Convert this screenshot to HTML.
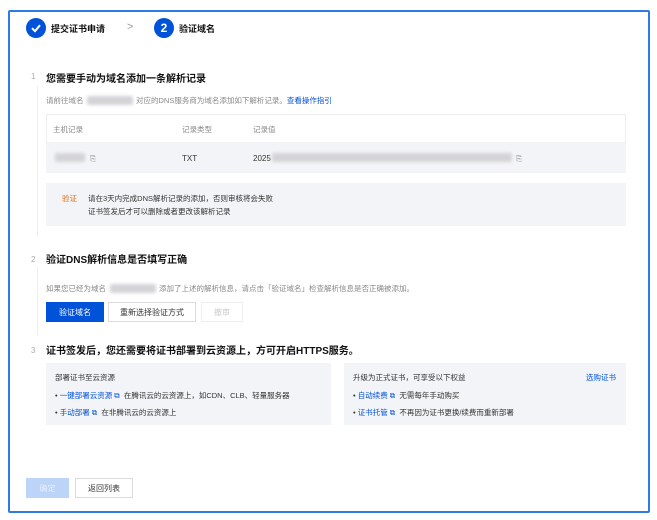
<!DOCTYPE html>
<html><head><meta charset="utf-8"><style>
*{margin:0;padding:0;box-sizing:border-box}
body{width:657px;height:520px;background:#fff;font-family:"Liberation Sans","Noto Sans CJK SC",sans-serif;position:relative;overflow:hidden;color:#333}
.a{position:absolute;white-space:nowrap}
.frame{left:8px;top:10px;width:642px;height:503px;border:2px solid #2e7be6;border-radius:2px}
.circ{width:20px;height:20px;border-radius:50%;background:#0052d9;color:#fff;font-size:12px;font-weight:bold;text-align:center;line-height:20px}
.b{font-weight:bold;font-size:10px;color:#111}
.s{font-size:7.5px;color:#888}
.n{font-size:8px;color:#aaa}
.blur{background:#d4d4d8;filter:blur(1.5px);border-radius:2px}
.btn{height:20px;font-size:8px;text-align:center;line-height:20px;border:1px solid #dcdcdc;background:#fff;color:#333}
.box{background:#f3f4f7}
.it{font-size:7.5px;color:#333}
.lk{color:#0052d9}
</style></head><body>
<div class="a frame"></div>
<div class="a circ" style="left:26px;top:18px"><svg width="20" height="20" viewBox="0 0 20 20"><path d="M6 10.2l3 3 5-6" stroke="#fff" stroke-width="2" fill="none"/></svg></div>
<div class="a b" style="left:51px;top:22px;font-size:9px">提交证书申请</div>
<div class="a" style="left:127px;top:21px;font-size:11px;color:#999">&gt;</div>
<div class="a circ" style="left:154px;top:18px">2</div>
<div class="a b" style="left:179px;top:22px;font-size:9px">验证域名</div>

<div class="a n" style="left:31px;top:72px">1</div>
<div class="a b" style="left:46px;top:70px">您需要手动为域名添加一条解析记录</div>
<div class="a" style="left:37px;top:86px;width:1px;height:150px;background:#eee"></div>
<div class="a s" style="left:46px;top:95px">请前往域名</div>
<div class="a blur" style="left:87px;top:96px;width:46px;height:9px"></div>
<div class="a s" style="left:136px;top:95px">对应的DNS服务商为域名添加如下解析记录。<span class="lk">查看操作指引</span></div>
<div class="a" style="left:46px;top:114px;width:580px;height:59px;border:1px solid #eee"></div>
<div class="a s" style="left:53px;top:124px">主机记录</div>
<div class="a s" style="left:182px;top:124px">记录类型</div>
<div class="a s" style="left:253px;top:124px">记录值</div>
<div class="a box" style="left:46px;top:142px;width:580px;height:31px"></div>
<div class="a blur" style="left:55px;top:153px;width:30px;height:9px"></div>
<div class="a s" style="left:90px;top:154px">⎘</div>
<div class="a" style="left:182px;top:154px;font-size:8px;color:#333">TXT</div>
<div class="a" style="left:253px;top:154px;font-size:8px;color:#333">2025</div>
<div class="a blur" style="left:272px;top:153px;width:240px;height:9px"></div>
<div class="a s" style="left:516px;top:154px">⎘</div>
<div class="a box" style="left:46px;top:183px;width:580px;height:43px"></div>
<div class="a" style="left:62px;top:193px;font-size:7.5px;color:#e37318">验证</div>
<div class="a it" style="left:88px;top:193px">请在3天内完成DNS解析记录的添加，否则审核将会失败</div>
<div class="a it" style="left:88px;top:206px">证书签发后才可以删除或者更改该解析记录</div>

<div class="a n" style="left:31px;top:255px">2</div>
<div class="a b" style="left:46px;top:251px">验证DNS解析信息是否填写正确</div>
<div class="a" style="left:37px;top:266px;width:1px;height:70px;background:#eee"></div>
<div class="a s" style="left:46px;top:283px">如果您已经为域名</div>
<div class="a blur" style="left:110px;top:284px;width:46px;height:9px"></div>
<div class="a s" style="left:159px;top:283px">添加了上述的解析信息，请点击「验证域名」检查解析信息是否正确被添加。</div>
<div class="a btn" style="left:46px;top:302px;width:58px;background:#0052d9;border-color:#0052d9;color:#fff">验证域名</div>
<div class="a btn" style="left:108px;top:302px;width:88px">重新选择验证方式</div>
<div class="a btn" style="left:201px;top:302px;width:42px;color:#ccc;border-color:#eee">撤审</div>

<div class="a n" style="left:31px;top:346px">3</div>
<div class="a b" style="left:46px;top:342px">证书签发后，您还需要将证书部署到云资源上，方可开启HTTPS服务。</div>
<div class="a box" style="left:46px;top:363px;width:285px;height:62px"></div>
<div class="a it" style="left:55px;top:372px">部署证书至云资源</div>
<div class="a it" style="left:55px;top:390px">• <span class="lk">一键部署云资源 ⧉</span>&nbsp; 在腾讯云的云资源上，如CDN、CLB、轻量服务器</div>
<div class="a it" style="left:55px;top:407px">• <span class="lk">手动部署 ⧉</span>&nbsp; 在非腾讯云的云资源上</div>
<div class="a box" style="left:344px;top:363px;width:282px;height:62px"></div>
<div class="a it" style="left:353px;top:372px">升级为正式证书，可享受以下权益</div>
<div class="a it lk" style="left:586px;top:372px">选购证书</div>
<div class="a it" style="left:353px;top:390px">• <span class="lk">自动续费 ⧉</span>&nbsp; 无需每年手动购买</div>
<div class="a it" style="left:353px;top:407px">• <span class="lk">证书托管 ⧉</span>&nbsp; 不再因为证书更换/续费而重新部署</div>

<div class="a btn" style="left:26px;top:478px;width:43px;background:#bcd4f7;border-color:#bcd4f7;color:#e6eefc">确定</div>
<div class="a btn" style="left:75px;top:478px;width:58px">返回列表</div>
</body></html>
